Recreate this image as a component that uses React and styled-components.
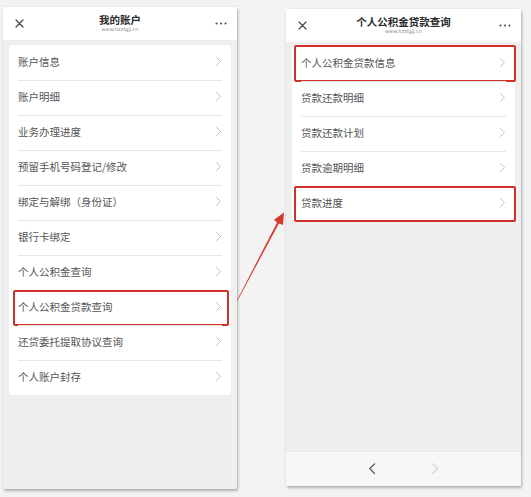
import React from 'react'
import styled, { createGlobalStyle } from 'styled-components'

const GlobalStyle = createGlobalStyle`
  html, body {
    margin: 0;
    padding: 0;
    background: #f3f3f3;
  }
  body {
    font-family: "Noto Sans CJK SC", "Noto Sans", sans-serif;
  }
`

const Page = styled.div`
  position: relative;
  width: 531px;
  height: 497px;
  display: flex;
  align-items: flex-start;
  padding-left: 3px;
  box-sizing: border-box;
  background: #f3f3f3;
  overflow: hidden;
`

const Phone = styled.div`
  width: ${p => p.$w}px;
  height: ${p => p.$h}px;
  margin-top: ${p => p.$top}px;
  margin-left: ${p => p.$left || 0}px;
  background: #efefef;
  display: flex;
  flex-direction: column;
  box-shadow: 1px 2px 3px rgba(0, 0, 0, 0.28), 0 0 2px rgba(0, 0, 0, 0.08);
  border-radius: 2px;
`

const Header = styled.div`
  height: 33px;
  background: #fff;
  display: grid;
  grid-template-columns: 32px 1fr 32px;
  align-items: center;
  flex-shrink: 0;
`

const IconCell = styled.div`
  display: flex;
  align-items: center;
  justify-content: center;
  height: 100%;
`

const TitleBox = styled.div`
  display: flex;
  flex-direction: column;
  align-items: center;
  padding-bottom: 1px;
`

const Title = styled.div`
  font-size: 10.5px;
  font-weight: 700;
  color: #2b2b2b;
  line-height: 13px;
`

const Url = styled.div`
  font-family: "DejaVu Sans", sans-serif;
  font-size: 5px;
  color: #8a8a8a;
  line-height: 7px;
`

const Body = styled.div`
  flex: 1;
  padding: ${p => p.$pad};
`

const Card = styled.div`
  background: #fff;
  border-radius: 3px;
  box-shadow: 0 0 1px rgba(0, 0, 0, 0.06);
`

const Row = styled.div`
  position: relative;
  height: 35px;
  margin: 0 9px;
  padding-bottom: 3px;
  display: flex;
  align-items: center;
  justify-content: space-between;
  border-top: ${p => (p.$first ? 'none' : '1px solid #e6e6e6')};
  box-sizing: border-box;
  font-size: 10.5px;
  color: #555;

  ${p =>
    p.$hl &&
    `&::after {
      content: '';
      position: absolute;
      top: -1px;
      bottom: -1px;
      left: ${p.$hlLeft}px;
      right: ${p.$hlRight}px;
      border: 2px solid #d2312b;
      border-radius: 2px;
    }`}
`

const BottomBar = styled.div`
  height: 35px;
  flex-shrink: 0;
  background: #f7f7f7;
  border-top: 1px solid #e9e9e9;
  display: flex;
  align-items: center;
  justify-content: center;
  gap: 54px;
  box-sizing: border-box;
`

const ArrowLayer = styled.svg`
  position: absolute;
  left: 0;
  top: 0;
  pointer-events: none;
`

const Close = () => (
  <svg width="9" height="9" viewBox="0 0 9 9">
    <path d="M1 1 L8 8 M8 1 L1 8" stroke="#444" strokeWidth="1.2" strokeLinecap="round" />
  </svg>
)

const More = () => (
  <svg width="12" height="3" viewBox="0 0 12 3">
    <circle cx="1.5" cy="1.5" r="1" fill="#444" />
    <circle cx="6" cy="1.5" r="1" fill="#444" />
    <circle cx="10.5" cy="1.5" r="1" fill="#444" />
  </svg>
)

const Chevron = ({ color = '#c2c2c2', size = 1, dir = 'right', w = 1 }) => (
  <svg width={5 * size + 2} height={9 * size + 2} viewBox="-1 -1 7 11">
    <polyline
      points={dir === 'right' ? '0.5,0.5 4.5,4.5 0.5,8.5' : '4.5,0.5 0.5,4.5 4.5,8.5'}
      fill="none"
      stroke={color}
      strokeWidth={w}
      strokeLinecap="round"
      strokeLinejoin="round"
    />
  </svg>
)

const Screen = ({ title, items, hl, hlLeft, hlRight, footer, ...rest }) => (
  <Phone {...rest}>
    <Header>
      <IconCell>
        <Close />
      </IconCell>
      <TitleBox>
        <Title>{title}</Title>
        <Url>www.hzzfgjj.cn</Url>
      </TitleBox>
      <IconCell>
        <More />
      </IconCell>
    </Header>
    <Body $pad={rest.$pad}>
      <Card>
        {items.map((t, i) => (
          <Row
            key={t}
            $first={i === 0}
            $hl={hl.includes(i)}
            $hlLeft={hlLeft}
            $hlRight={hlRight}
          >
            <span>{t}</span>
            <Chevron />
          </Row>
        ))}
      </Card>
    </Body>
    {footer && (
      <BottomBar>
        <Chevron color="#444" size={1.25} dir="left" w={1.1} />
        <Chevron color="#cfcfcf" size={1.25} w={1.1} />
      </BottomBar>
    )}
  </Phone>
)

const leftItems = [
  '账户信息',
  '账户明细',
  '业务办理进度',
  '预留手机号码登记/修改',
  '绑定与解绑（身份证）',
  '银行卡绑定',
  '个人公积金查询',
  '个人公积金贷款查询',
  '还贷委托提取协议查询',
  '个人账户封存',
]

const rightItems = ['个人公积金贷款信息', '贷款还款明细', '贷款还款计划', '贷款逾期明细', '贷款进度']

const App = () => {
  return (
    <>
      <GlobalStyle />
      <Page>
        <Screen
          title="我的账户"
          items={leftItems}
          hl={[7]}
          hlLeft={-5}
          hlRight={-7}
          $w={234}
          $h={482}
          $top={7}
          $pad="5px 6px"
        />
        <Screen
          title="个人公积金贷款查询"
          items={rightItems}
          hl={[0, 4]}
          hlLeft={-7}
          hlRight={-10}
          footer
          $w={235}
          $h={477}
          $top={9}
          $left={49}
          $pad="4px 6px"
        />
        <ArrowLayer width="531" height="497" viewBox="0 0 531 497">
          <polygon
            points="237.3,301.1 278.9,223.4 283.0,225.0 284.0,212.5 274.0,219.8 277.1,222.5 236.7,300.8"
            fill="#d63a2f"
          />
        </ArrowLayer>
      </Page>
    </>
  )
}

export default App
